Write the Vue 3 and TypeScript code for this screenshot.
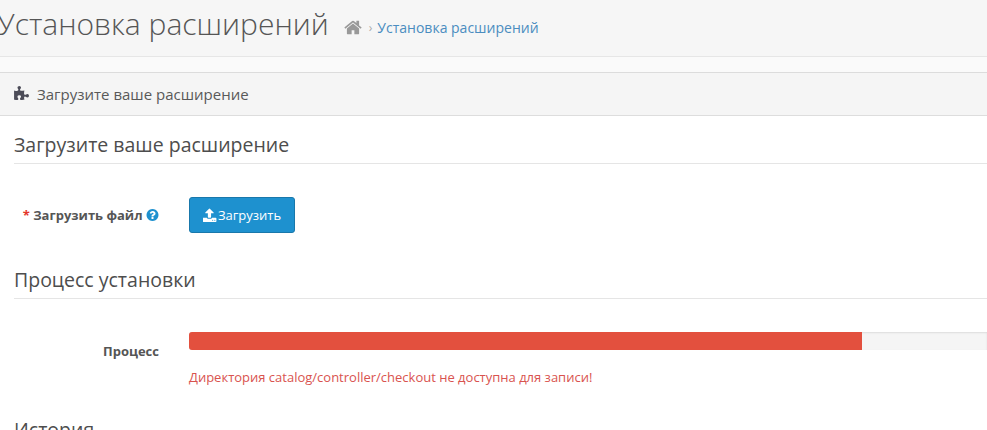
<script setup lang="ts">
const progress = 84.3;
</script>

<template>
  <div class="page">
    <header class="page-header">
      <h1 class="page-title">Установка расширений</h1>
      <nav class="breadcrumb">
        <svg class="home-icon" viewBox="0 0 1664 1792" aria-hidden="true">
          <path d="M1408 992v480q0 26-19 45t-45 19h-384v-384h-256v384h-384q-26 0-45-19t-19-45v-480q0-1 .5-3t.5-3l575-474 575 474q1 2 1 6zm223-69l-62 74q-8 9-21 11h-3q-13 0-21-7l-692-577-692 577q-12 8-24 7-13-2-21-11l-62-74q-8-10-7-23.500t11-21.500l719-599q32-26 76-26t76 26l244 204v-195q0-14 9-23t23-9h192q14 0 23 9t9 23v408l219 182q10 8 11 21.500t-7 23.500z" />
        </svg>
        <span class="crumb-sep">›</span>
        <a class="crumb-link">Установка расширений</a>
      </nav>
    </header>

    <section class="panel">
      <div class="panel-heading">
        <svg class="puzzle-icon" viewBox="0 0 1664 1792" aria-hidden="true">
          <path d="M1664 1098q0 81-44.500 135t-123.500 54q-41 0-77.500-17.500t-59-38-56.500-38-71-17.500q-110 0-110 124 0 39 16 115t15 115v5q-22 0-33 1-34 3-97.500 11.500t-115.500 13.500-98 5q-61 0-103-26.500t-42-83.500q0-37 17.500-71t38-56.500 38-59 17.500-77.500q0-79-54-123.500t-135-44.500q-84 0-143 45.500t-59 127.500q0 43 15 83t33.500 64.500 33.500 53 15 50.500q0 45-46 89-37 35-117 35-95 0-245-24-9-2-27.500-4t-27.500-4l-13-2q-1 0-3-1-2 0-2-1v-1024q2 1 17.500 3.500t34 5 21.500 3.500q150 24 245 24 80 0 117-35 46-44 46-89 0-22-15-50.500t-33.500-53-33.500-64.500-15-83q0-82 59-127.500t144-45.500q80 0 134 44.500t54 123.500q0 41-17.500 77.500t-38 59-38 56.500-17.500 71q0 57 42 83.500t103 26.500q64 0 180-15t163-17v2q-1 2-3.500 17.500t-5 34-3.500 21.500q-24 150-24 245 0 80 35 117 44 46 89 46 22 0 50.500-15t53-33.500 64.500-33.500 83-15q82 0 127.500 59t45.500 143z" />
        </svg>
        <span>Загрузите ваше расширение</span>
      </div>

      <div class="panel-body">
        <h2 class="legend">Загрузите ваше расширение</h2>
        <div class="form-row upload-row">
          <label class="form-label">
            <span class="required">*</span> Загрузить файл
            <svg class="help-icon" viewBox="0 0 1536 1792" aria-hidden="true">
              <path d="M896 1376v-192q0-14-9-23t-23-9h-192q-14 0-23 9t-9 23v192q0 14 9 23t23 9h192q14 0 23-9t9-23zm256-672q0-88-55.500-163t-138.500-116-170-41q-243 0-371 213-15 24 8 42l132 100q7 6 19 6 16 0 25-12 53-68 86-92 34-24 86-24 48 0 85.500 26t37.500 59q0 38-20 61t-68 45q-63 28-115.500 86.500t-52.500 125.500v36q0 14 9 23t23 9h192q14 0 23-9t9-23q0-19 21.500-49.500t54.500-49.500q32-18 49-28.500t46-35 44.500-48 28-60.500 12.500-81zm384 192q0 209-103 385.500t-279.500 279.500-385.500 103-385.500-103-279.500-279.500-103-385.500 103-385.500 279.500-279.500 385.500-103 385.500 103 279.500 279.500 103 385.500z" />
            </svg>
          </label>
          <button class="btn-upload" type="button">
            <svg class="upload-icon" viewBox="0 0 1664 1792" aria-hidden="true">
              <path d="M1216 1472q0-26-19-45t-45-19-45 19-19 45 19 45 45 19 45-19 19-45zm256 0q0-26-19-45t-45-19-45 19-19 45 19 45 45 19 45-19 19-45zm128-224v320q0 40-28 68t-68 28h-1472q-40 0-68-28t-28-68v-320q0-40 28-68t68-28h427q21 56 70.500 92t110.500 36h256q61 0 110.500-36t70.500-92h427q40 0 68 28t28 68zm-325-648q-17 40-59 40h-256v448q0 26-19 45t-45 19h-256q-26 0-45-19t-19-45v-448h-256q-42 0-59-40-17-39 14-69l448-448q18-19 45-19t45 19l448 448q31 30 14 69z" />
            </svg>
            Загрузить
          </button>
        </div>

        <h2 class="legend">Процесс установки</h2>
        <div class="form-row progress-row">
          <label class="form-label">Процесс</label>
          <div class="progress-col">
            <div class="progress">
              <div class="progress-bar" :style="{ width: progress + '%' }"></div>
            </div>
            <div class="progress-error">Директория catalog/controller/checkout не доступна для записи!</div>
          </div>
        </div>

        <h2 class="legend history">История</h2>
      </div>
    </section>
  </div>
</template>

<style>
html,
body {
  margin: 0;
  background: #fff;
  overflow: hidden;
}
</style>

<style scoped>
.page {
  width: 987px;
  height: 430px;
  overflow: hidden;
  font-family: "Open Sans", "Liberation Sans", sans-serif;
  font-size: 13px;
  color: #666;
  background: #fafafa;
}

.page-header {
  display: flex;
  align-items: center;
  height: 56px;
  margin-bottom: 15px;
  background: #f6f6f6;
  border-bottom: 1px solid #e6e6e6;
}

.page-title {
  margin: -9px 0 0 -3px;
  font-size: 30px;
  font-weight: 300;
  line-height: 48px;
  color: #555;
}

.breadcrumb {
  display: flex;
  align-items: center;
  margin: -2px 0 0 15px;
  font-size: 14px;
}

.home-icon {
  width: 18px;
  height: 19px;
  fill: #999;
}

.crumb-sep {
  margin: 0 5px 0 7px;
  font-size: 12px;
  color: #aaa;
}

.crumb-link {
  color: #4b8dc0;
  font-size: 14px;
}

.panel {
  background: #fff;
  border-top: 1px solid #dcdcdc;
}

.panel-heading {
  display: flex;
  align-items: center;
  gap: 8px;
  height: 42px;
  padding-left: 14px;
  background: #f5f5f5;
  border-bottom: 1px solid #ddd;
  font-size: 15px;
  color: #595959;
}

.puzzle-icon {
  width: 15px;
  height: 16px;
  fill: #4c4c58;
}

.panel-body {
  padding: 0 0 0 14px;
  height: 320px;
}

.legend {
  margin: 0;
  padding: 15px 0 5px;
  font-size: 19.5px;
  font-weight: 400;
  line-height: 27px;
  color: #4d4d4d;
  border-bottom: 1px solid #e5e5e5;
}

.form-row {
  display: flex;
}

.form-label {
  flex: none;
  width: 145px;
  text-align: right;
  font-size: 13px;
  font-weight: 700;
  color: #555;
}

.upload-row {
  align-items: center;
  padding: 33px 0 18px;
}

.required {
  color: #e3362b;
}

.help-icon {
  width: 13px;
  height: 14px;
  vertical-align: -2px;
  fill: #1e91cf;
}

.btn-upload {
  display: flex;
  align-items: center;
  gap: 1px;
  height: 36px;
  width: 106px;
  margin-left: 30px;
  justify-content: center;
  padding: 0;
  background: #1e91cf;
  border: 1px solid #1978ab;
  border-radius: 3px;
  color: #fff;
  font-family: inherit;
  font-size: 13px;
}

.upload-icon {
  width: 14px;
  height: 15px;
  fill: #fff;
}

.progress-row {
  padding-top: 33px;
}

.progress-row .form-label {
  padding-top: 10px;
}

.progress-col {
  flex: 1;
  margin-left: 30px;
}

.progress {
  height: 18px;
  background: #f5f5f5;
  border-radius: 3px 0 0 3px;
  box-shadow: inset 0 1px 2px rgba(0, 0, 0, 0.1);
  overflow: hidden;
}

.progress-bar {
  height: 100%;
  background: #e3503e;
}

.progress-error {
  margin-top: 18px;
  font-size: 13px;
  color: #d9534f;
}

.history {
  padding-top: 30px;
}
</style>
